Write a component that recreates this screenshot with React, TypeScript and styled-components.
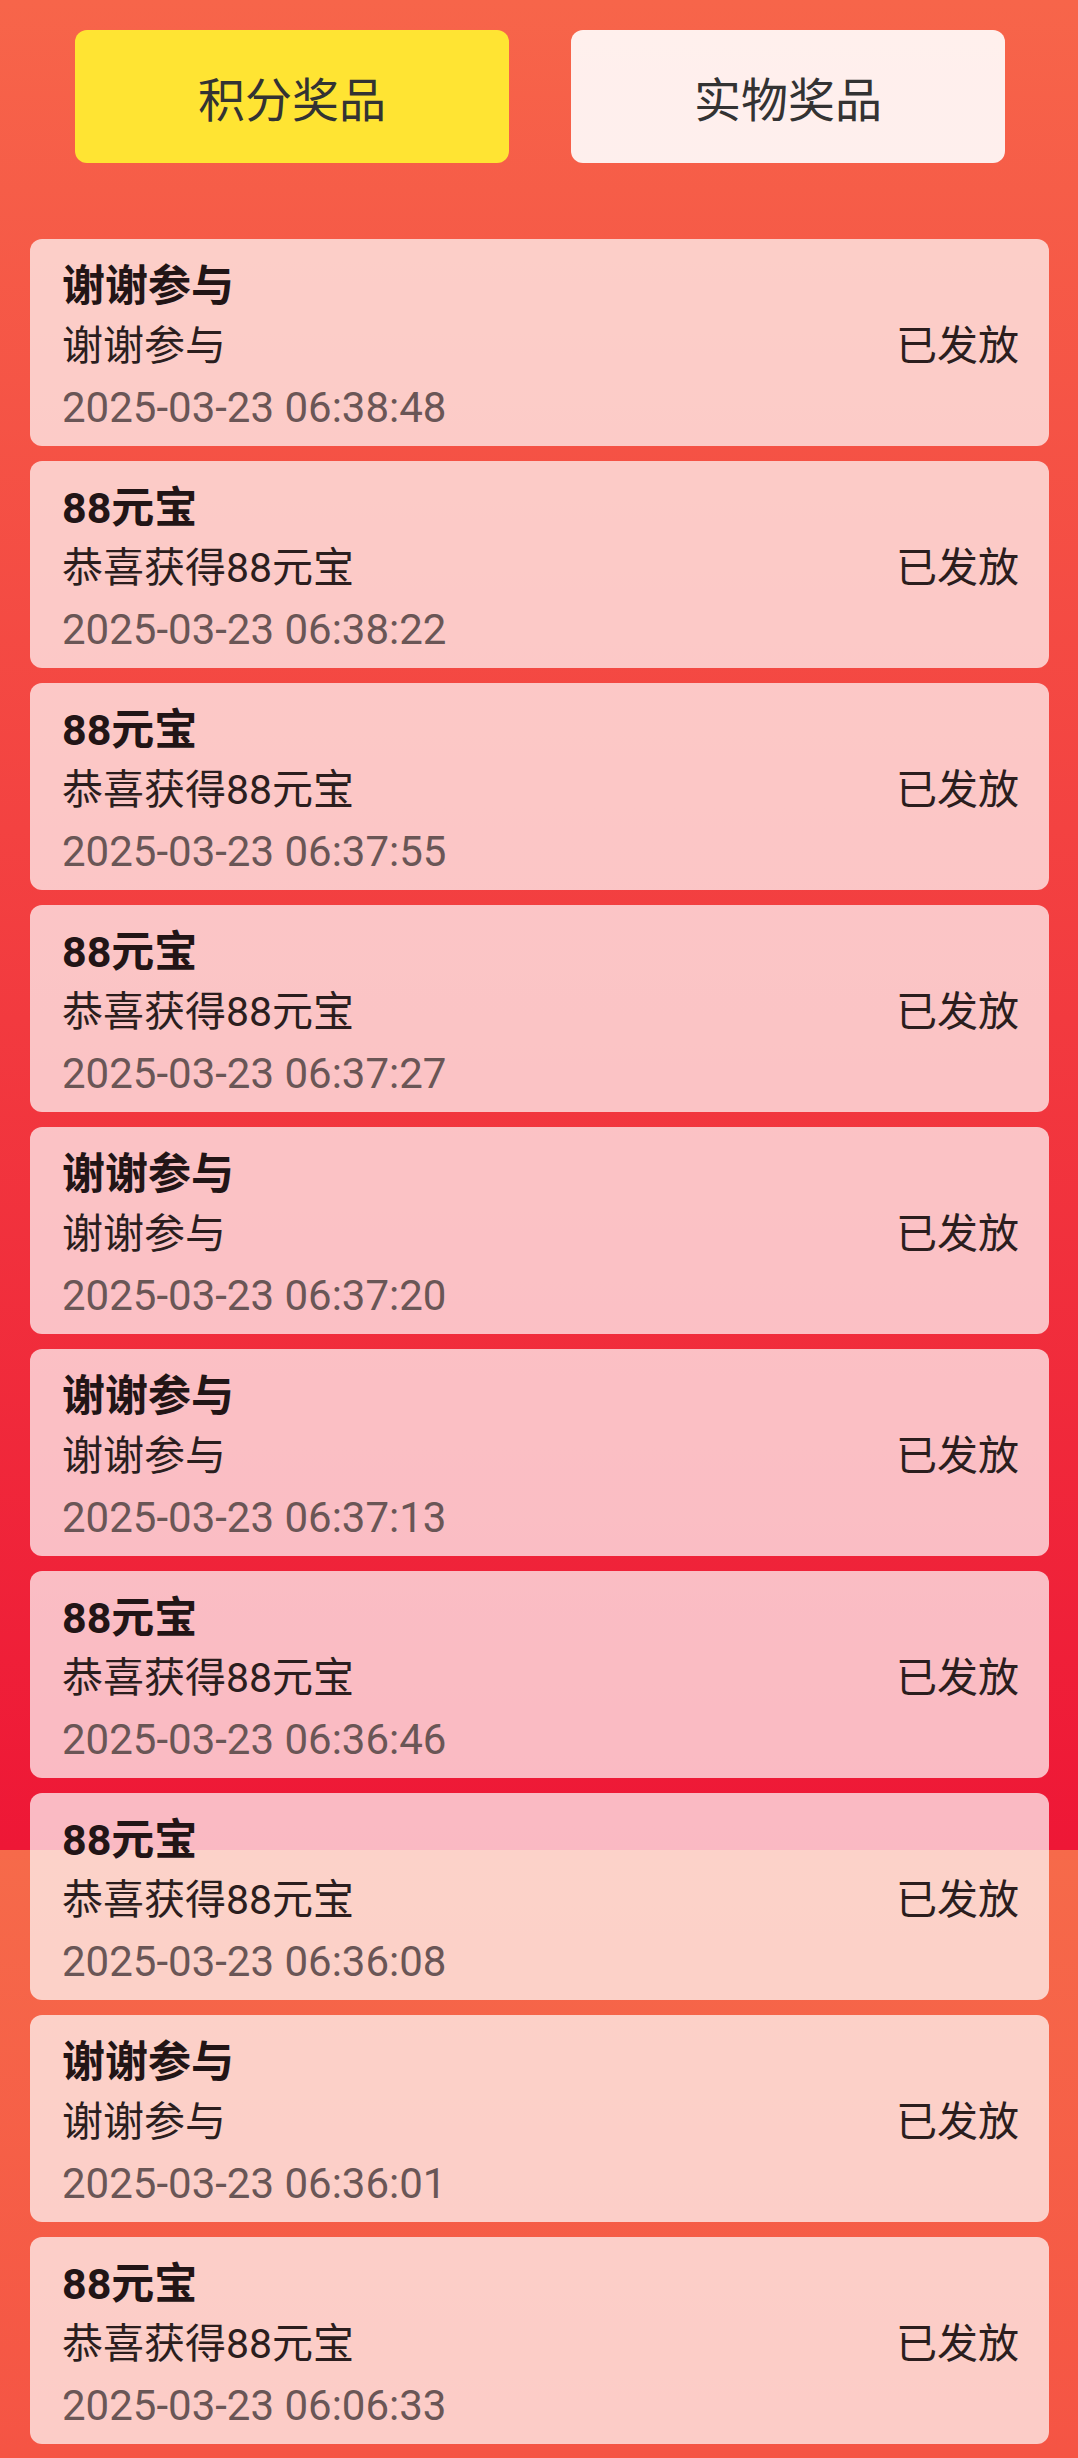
import React from 'react';
import styled, { createGlobalStyle } from 'styled-components';

type Prize = {
    title: string,
    desc: string,
    time: string,
    status: string
}

const prizes: Prize[] = [
    { title: '谢谢参与', desc: '谢谢参与', time: '2025-03-23 06:38:48', status: '已发放' },
    { title: '88元宝', desc: '恭喜获得88元宝', time: '2025-03-23 06:38:22', status: '已发放' },
    { title: '88元宝', desc: '恭喜获得88元宝', time: '2025-03-23 06:37:55', status: '已发放' },
    { title: '88元宝', desc: '恭喜获得88元宝', time: '2025-03-23 06:37:27', status: '已发放' },
    { title: '谢谢参与', desc: '谢谢参与', time: '2025-03-23 06:37:20', status: '已发放' },
    { title: '谢谢参与', desc: '谢谢参与', time: '2025-03-23 06:37:13', status: '已发放' },
    { title: '88元宝', desc: '恭喜获得88元宝', time: '2025-03-23 06:36:46', status: '已发放' },
    { title: '88元宝', desc: '恭喜获得88元宝', time: '2025-03-23 06:36:08', status: '已发放' },
    { title: '谢谢参与', desc: '谢谢参与', time: '2025-03-23 06:36:01', status: '已发放' },
    { title: '88元宝', desc: '恭喜获得88元宝', time: '2025-03-23 06:06:33', status: '已发放' },
];

const App = () => {
    const [tab, setTab] = React.useState(0);

    return (
        <>
            <GlobalStyle />
            <Page>
                <Tabs>
                    <Tab active={tab === 0} onClick={() => setTab(0)}>积分奖品</Tab>
                    <Tab active={tab === 1} onClick={() => setTab(1)}>实物奖品</Tab>
                </Tabs>
                <List>
                    {prizes.map((p, i) => (
                        <Card key={i}>
                            <Info>
                                <Title>{p.title}</Title>
                                <Desc>{p.desc}</Desc>
                                <Time>{p.time}</Time>
                            </Info>
                            <Status>{p.status}</Status>
                        </Card>
                    ))}
                </List>
            </Page>
        </>
    )
}

export default App;

const GlobalStyle = createGlobalStyle`
    html, body {
        margin: 0;
        padding: 0;
    }
    body {
        min-height: 2458px;
        font-family: Roboto, "Noto Sans CJK SC", sans-serif;
        background: linear-gradient(180deg,
            #f7654a 0px,
            #ee1736 1850px,
            #f66a4a 1850px,
            #f55444 2458px);
        background-repeat: no-repeat;
    }
`;

const Page = styled.div`
    padding: 30px 0 17px;
`;

const Tabs = styled.div`
    display: grid;
    grid-template-columns: 434px 434px;
    column-gap: 62px;
    padding: 0 74px 0 75px;
`;

const Tab = styled.div<{ active: boolean }>`
    height: 133px;
    border-radius: 12px;
    display: flex;
    align-items: center;
    justify-content: center;
    font-size: 47px;
    color: #333;
    background: ${p => p.active ? '#ffe433' : 'rgba(255, 255, 255, 0.9)'};
    cursor: pointer;
`;

const List = styled.div`
    display: flex;
    flex-direction: column;
    gap: 15px;
    margin-top: 76px;
    padding: 0 29px 0 30px;
`;

const Card = styled.div`
    height: 207px;
    box-sizing: border-box;
    padding: 11px 30px 13px 32px;
    border-radius: 12px;
    background: rgba(255, 255, 255, 0.7);
    display: flex;
    align-items: center;
    justify-content: space-between;
`;

const Info = styled.div`
    display: flex;
    flex-direction: column;
    padding-top: 11px;
`;

const Title = styled.div`
    font-size: 43px;
    line-height: 60px;
    font-weight: bold;
    color: #221516;
`;

const Desc = styled.div`
    font-size: 41px;
    line-height: 61px;
    color: #2b1e1e;
`;

const Time = styled.div`
    font-size: 42px;
    line-height: 62px;
    color: #6a5656;
`;

const Status = styled.div`
    font-size: 41px;
    color: #2b1e1e;
`;
